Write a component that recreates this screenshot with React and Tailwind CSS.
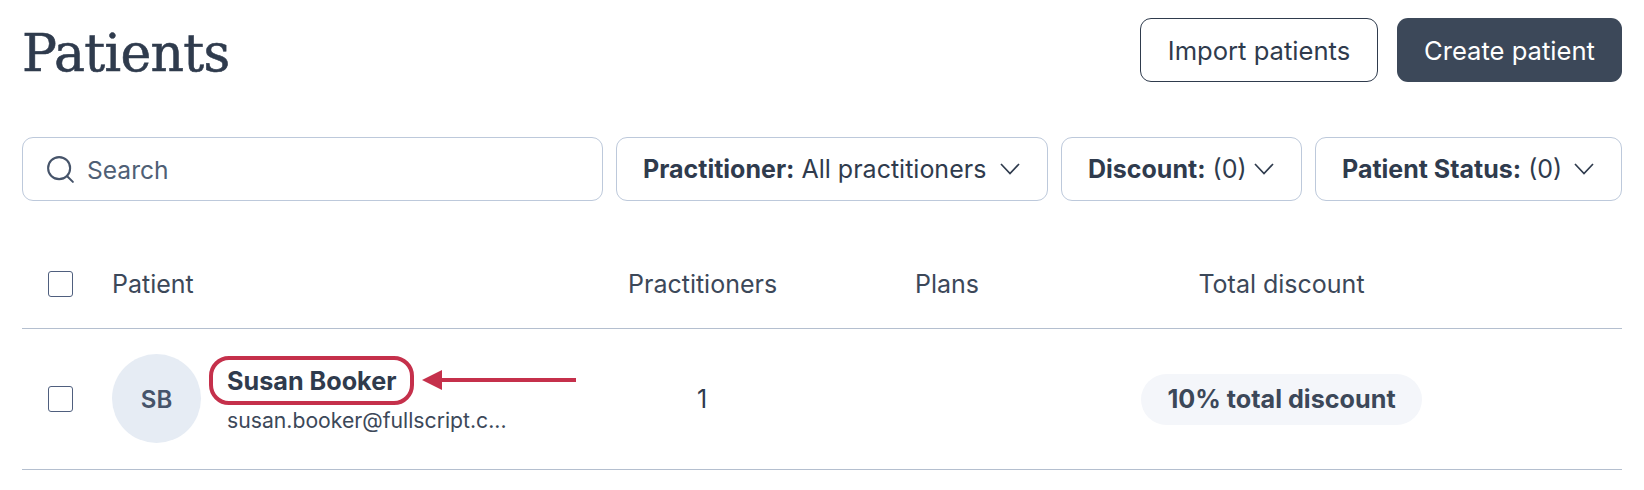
import React from "react";
import { Search } from "lucide-react";

const Filter = ({ label, value, width }) => (
  <button className={`flex items-center justify-between h-16 pl-[26px] pr-[27px] ${width} bg-white border border-[#bdc9db] rounded-[11px] text-[25px] text-[#2f3b4d]`}>
    <span className="whitespace-nowrap pt-[2px]">
      <b className="font-bold">{label}</b> {value}
    </span>
    <svg width="20" height="12" viewBox="0 0 20 12" fill="none" stroke="#2f3b4d" strokeWidth="1.7">
      <path d="M1 1l9 9.5L19 1" />
    </svg>
  </button>
);

const Checkbox = () => (
  <span className="block w-[25px] h-[26px] rounded-[3px] border border-[#4f5f7e] bg-white" />
);

const App = () => {
  return (
    <div className="w-[1644px] h-[490px] bg-white px-[22px] overflow-hidden font-['Inter',sans-serif] text-[#3c4859]">
      {/* Title */}
      <div className="flex justify-between pt-[18px] h-[137px] items-start">
        <h1 className="font-['DejaVu_Serif',serif] text-[52px] leading-[64px] tracking-[-0.7px] pt-[3px] [-webkit-text-stroke:0.6px_#2f3b4d] text-[#2f3b4d]">Patients</h1>
        <div className="flex gap-[19px]">
          <button className="w-[238px] h-16 pt-[2px] border border-[#2f3b4d] rounded-[11px] text-[25.6px] text-[#2f3b4d]">Import patients</button>
          <button className="w-[225px] h-16 pt-[2px] bg-[#3c4859] rounded-[11px] text-[25.6px] text-white">Create patient</button>
        </div>
      </div>

      {/* Filters */}
      <div className="flex gap-[13px]">
        <div className="flex items-center gap-[10px] flex-1 h-16 pl-[21px] border border-[#bdc9db] rounded-[11px] text-[24.6px] text-[#4f5f75]">
          <Search size={33} strokeWidth={1.5} className="text-[#46546a]" />
          <span className="pt-[2px]">Search</span>
        </div>
        <Filter label="Practitioner:" value="All practitioners" width="w-[432px]" />
        <Filter label="Discount:" value="(0)" width="w-[241px]" />
        <Filter label="Patient Status:" value="(0)" width="w-[307px]" />
      </div>

      {/* Table */}
      <div className="grid grid-cols-[90px_516px_148px_342px_327px_1fr] items-center h-[128px] border-b border-[#b4bfcf] text-[25px] pt-[38px]">
        <div className="pl-[26px]"><Checkbox /></div>
        <div className="pt-[2px]">Patient</div>
        <div className="text-center whitespace-nowrap pt-[2px]">Practitioners</div>
        <div className="text-center pt-[2px]">Plans</div>
        <div className="text-center pt-[2px]">Total discount</div>
      </div>
      <div className="grid grid-cols-[90px_516px_148px_342px_327px_1fr] items-center h-[141px] border-b border-[#b4bfcf]">
        <div className="pl-[26px]"><Checkbox /></div>
        <div className="flex items-center gap-[26px] relative pb-[2px]">
          <div className="flex items-center justify-center w-[89px] h-[89px] pt-[3px] rounded-full bg-[#e6ecf4] text-[24px] font-semibold text-[#46546a]">SB</div>
          <div className="pt-[3px]">
            <div className="text-[25.2px] font-bold text-[#2f3b4d] leading-[32px] whitespace-nowrap">Susan Booker</div>
            <div className="text-[21.2px] leading-[28px] mt-[9px] whitespace-nowrap">susan.booker@fullscript.c...</div>
          </div>
          {/* Annotation */}
          <div className="absolute left-[97px] top-[2px] w-[205px] h-[49px] border-[4px] border-[#c5304b] rounded-[20px]" />
          <svg className="absolute left-[310px] top-[16px]" width="154" height="20" viewBox="0 0 154 20">
            <path d="M20 0 L0 10 L20 20 Z" fill="#c5304b" />
            <rect x="18" y="8" width="136" height="4" fill="#c5304b" />
          </svg>
        </div>
        <div className="text-center text-[25px] text-[#2f3b4d] pt-[2px]">1</div>
        <div />
        <div className="flex justify-center">
          <span className="flex items-center justify-center w-[281px] h-[51px] pt-[2px] rounded-full bg-[#f4f6fa] text-[25.2px] font-bold whitespace-nowrap">10% total discount</span>
        </div>
      </div>
    </div>
  );
};

export default App;
